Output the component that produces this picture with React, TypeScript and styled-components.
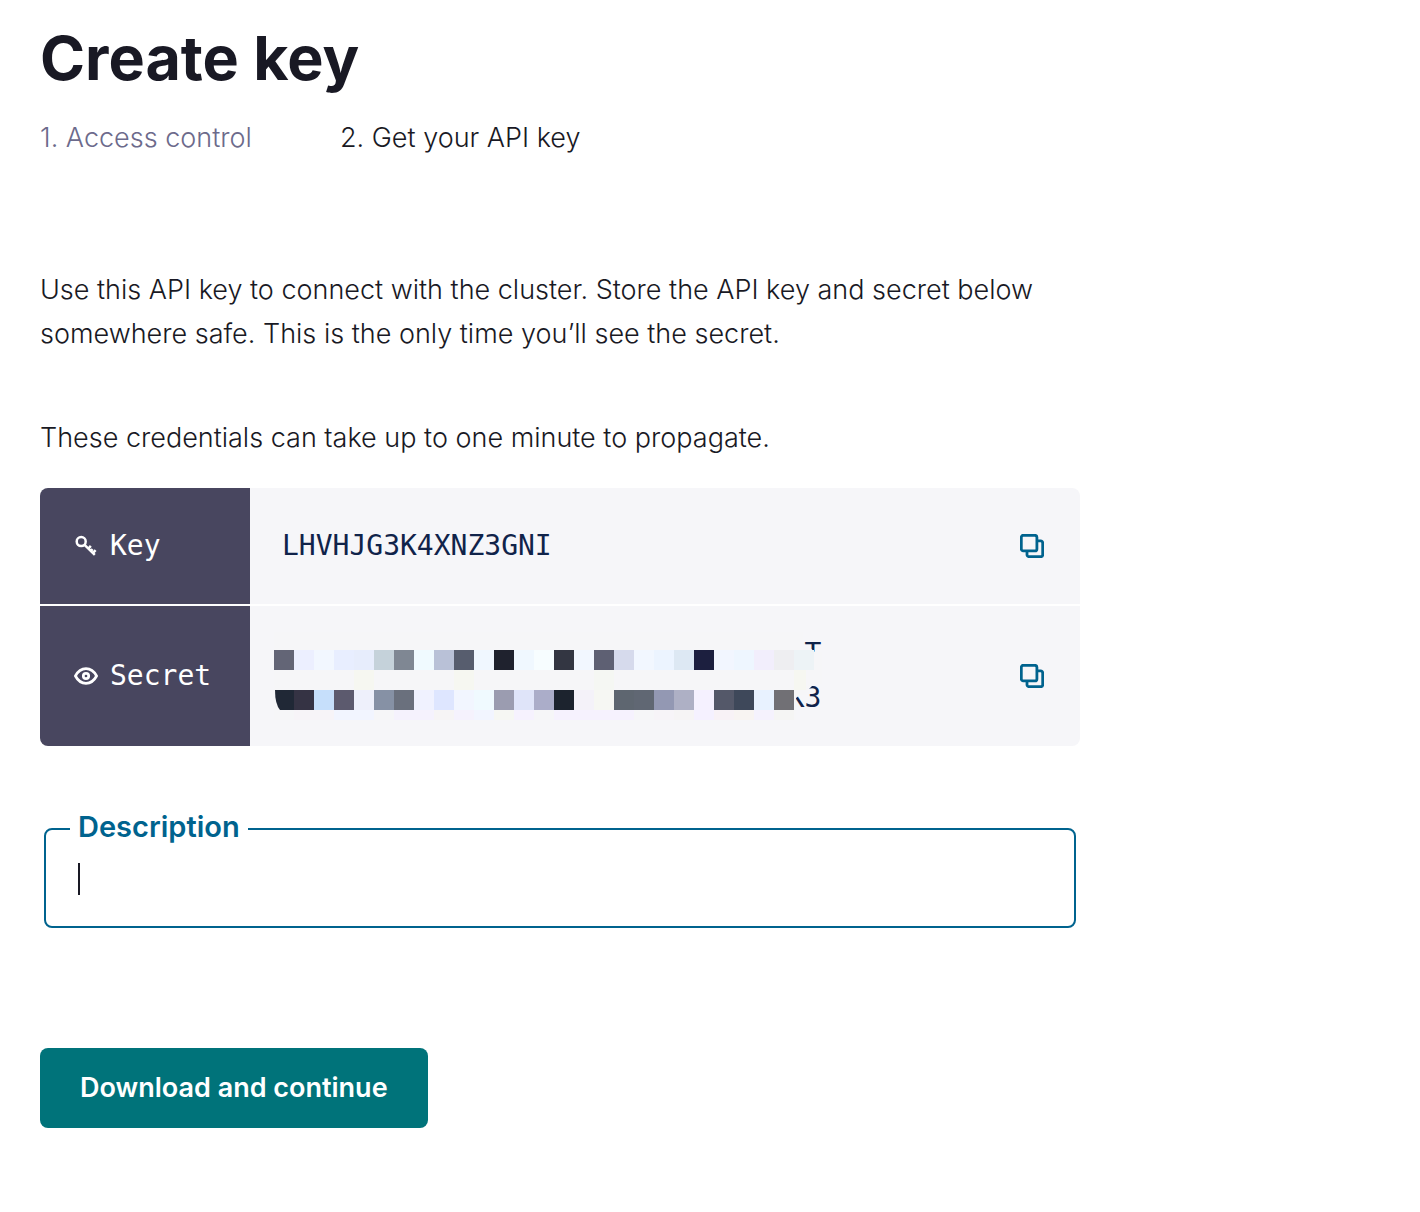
import React from "react";
import styled, { createGlobalStyle } from "styled-components";

const GlobalStyle = createGlobalStyle`
  *, *::before, *::after { box-sizing: border-box; }
  body {
    margin: 0;
    background: #ffffff;
    color: #191924;
    font-family: Inter, "Liberation Sans", sans-serif;
    font-size: 27px;
    font-weight: 300;
    line-height: 44px;
  }
`;

const Page = styled.main`
  max-width: 1120px;
  padding: 20px 40px 84px;
`;

const Title = styled.h1`
  margin: 0;
  font-size: 61px;
  line-height: 76px;
  font-weight: 700;
`;

const Steps = styled.ol`
  display: flex;
  margin: 20px 0 0;
  padding: 0;
  list-style: none;
`;

const Step = styled.li<{ $current?: boolean }>`
  min-width: 300px;
  color: ${(p) => (p.$current ? "#191924" : "#6c6a8b")};
`;

const Intro = styled.p`
  max-width: 1020px;
  margin: 108px 0 0;
`;

const Note = styled.p`
  margin: 60px 0 28px;
`;

const Credentials = styled.table`
  width: 100%;
  border-spacing: 0;
  border-radius: 8px;
  overflow: hidden;
  font-family: "DejaVu Sans Mono", monospace;
  font-size: 28px;
`;

const Row = styled.tr`
  & + & > * {
    border-top: 2px solid #ffffff;
  }
`;

const NameCell = styled.th`
  width: 210px;
  padding: 0 0 0 34px;
  background: #48465f;
  color: #ffffff;
  font-weight: 400;
  text-align: left;
`;

const Name = styled.span`
  display: flex;
  align-items: center;
  gap: 12px;
`;

const ValueCell = styled.td`
  padding: 0 32px;
  background: #f6f6f9;
`;

const Value = styled.div<{ $tall?: boolean }>`
  display: flex;
  align-items: center;
  justify-content: space-between;
  height: ${(p) => (p.$tall ? 140 : 116)}px;
  color: #10234a;
`;

const Secret = styled.span`
  position: relative;
  width: 32ch;
  text-align: right;
`;

const Mosaic = styled.svg`
  position: absolute;
  left: -8px;
  top: 0;
`;

const CopyButton = styled.button`
  display: flex;
  padding: 4px;
  border: 0;
  background: none;
  color: #00638e;
  cursor: pointer;
`;

const Field = styled.fieldset`
  min-width: 0;
  margin: 64px 4px 0;
  padding: 0 32px 16px 24px;
  border: 2px solid #00638e;
  border-radius: 8px;
`;

const Legend = styled.legend`
  padding: 0 8px 4px;
  color: #00638e;
  font-size: 29px;
  line-height: 34px;
  font-weight: 600;
`;

const Entry = styled.div`
  display: flex;
  align-items: center;
  height: 62px;
  padding-left: 8px;
`;

const Caret = styled.span`
  width: 2px;
  height: 32px;
  background: #191924;
`;

const TextInput = styled.input`
  flex: 1;
  min-width: 0;
  height: 44px;
  padding: 0;
  border: 0;
  outline: 0;
  background: none;
  color: inherit;
  font: inherit;
`;

const Submit = styled.button`
  display: block;
  margin-top: 120px;
  padding: 0 40px;
  height: 80px;
  border: 0;
  border-radius: 8px;
  background: #00737a;
  color: #ffffff;
  font: inherit;
  font-weight: 600;
  cursor: pointer;
`;

const KeyIcon = () => (
  <svg width="24" height="24" viewBox="0 0 24 24" fill="none" stroke="currentColor" strokeWidth="2.5" aria-hidden="true">
    <circle cx="7.200" cy="7.600" r="4.500" />
    <path d="M10.300 10.700 20.800 20.800M14.400 14.800l2.400-2.900M19 19l2.600-2.900M17 17l1.600-1.900" />
  </svg>
);

const EyeIcon = () => (
  <svg width="24" height="24" viewBox="0 0 24 24" fill="none" stroke="currentColor" aria-hidden="true">
    <path d="M1.400 12C4 7.200 7.700 4.700 12 4.700S20 7.200 22.600 12C20 16.800 16.300 19.300 12 19.300S4 16.800 1.400 12Z" strokeWidth="2.700" strokeLinejoin="round" />
    <circle cx="12" cy="12" r="2.700" strokeWidth="2.700" />
  </svg>
);

const CopyIcon = () => (
  <svg width="24" height="24" viewBox="0 0 24 24" fill="none" stroke="currentColor" strokeWidth="2.800" aria-hidden="true">
    <rect x="1.300" y="1.300" width="15.600" height="15.600" rx="2" />
    <path d="M18 6.900h2.700a2 2 0 0 1 2 2v11.800a2 2 0 0 1-2 2H9a2 2 0 0 1-2-2V18" />
  </svg>
);

const CELL = 20;

const MOSAIC_ROWS: { y: number; height: number; cells: string[] }[] = [
  {
    y: 18,
    height: 20,
    cells: "#636576 #ecefff #f2f7ff #e8eeff #e7edfc #c5d2da #7f8793 #f0faff #b9c1d7 #575d6e #f0f7ff #1f222e #f0f8ff #f7fdff #333642 #f2f7ff #5e6073 #d6daec #f2f7ff #ecf4ff #dde8f3 #1c1f3f #f2f6ff #eef6ff #f2eefc #eeeef1 #edf3f6".split(" "),
  },
  {
    y: 38,
    height: 20,
    cells: "- - - - #f6f7f1 - - - - #f6f7f1 - - - - - - #f5f7f3 - - - - - - - - - #f6f7f1".split(" "),
  },
  {
    y: 58,
    height: 20,
    cells: "- #353344 #c6dffb #5c5a6e #eef0fb #8691a5 #6a707d #f0f2ff #dee6ff #f2f6ff #f0faff #9b9cb0 #dfe4f9 #abadc9 #1c232e #f4f2f9 #f6f7f3 #5e6670 #606773 #9398b3 #aeb0c5 #f5f1ff #545869 #3e485a #e8f2ff #717075".split(" "),
  },
  {
    y: 78,
    height: 10,
    cells: "- #f7f4f8 #f7f4f8 #f2f5ff #f2f5ff - #f5f2fd #f5f2fd #f6f4f5 #f5f2fd #f2f5ff #f6f7f3 #f6f2fe - #f6f2fe #f6f2fe #f6f2fe #f6f2fe - #f7f4f8 #f6f4f5 #f5f1ff #f8f2f6 #f8f4f2 #f5f2fd #f5f5f4".split(" "),
  },
];

const Redaction = () => (
  <Mosaic width="552" height="88" viewBox="0 0 552 88" aria-hidden="true">
    <path d="M0 0H529V15H535L541 20H548V52H540L532 60V63H526L522 66V88H0Z" fill="#f6f6f8" />
    {MOSAIC_ROWS.map((row) =>
      row.cells.map((fill, i) =>
        fill === "-" ? null : (
          <rect key={`${row.y}-${i}`} x={i * CELL} y={row.y} width={i === 26 && row.y > 18 ? 12 : CELL} height={row.height} fill={fill} shapeRendering="crispEdges" />
        )
      )
    )}
    <path d="M1 58H20V78H6Q1 72 1 58Z" fill="#202836" />
  </Mosaic>
);

export default function App() {
  return (
    <>
      <GlobalStyle />
      <Page>
        <Title>Create key</Title>
        <Steps>
          <Step>1. Access control</Step>
          <Step $current aria-current="step">2. Get your API key</Step>
        </Steps>
        <Intro>
          Use this API key to connect with the cluster. Store the API key and secret below
          somewhere safe. This is the only time you’ll see the secret.
        </Intro>
        <Note>These credentials can take up to one minute to propagate.</Note>
        <Credentials>
          <tbody>
            <Row>
              <NameCell scope="row">
                <Name><KeyIcon />Key</Name>
              </NameCell>
              <ValueCell>
                <Value>
                  <span>LHVHJG3K4XNZ3GNI</span>
                  <CopyButton type="button" aria-label="Copy key"><CopyIcon /></CopyButton>
                </Value>
              </ValueCell>
            </Row>
            <Row>
              <NameCell scope="row">
                <Name><EyeIcon />Secret</Name>
              </NameCell>
              <ValueCell>
                <Value $tall>
                  <Secret>
                    T<br />K3
                    <Redaction />
                  </Secret>
                  <CopyButton type="button" aria-label="Copy secret"><CopyIcon /></CopyButton>
                </Value>
              </ValueCell>
            </Row>
          </tbody>
        </Credentials>
        <Field>
          <Legend><label htmlFor="description">Description</label></Legend>
          <Entry>
            <Caret />
            <TextInput id="description" type="text" />
          </Entry>
        </Field>
        <Submit type="button">Download and continue</Submit>
      </Page>
    </>
  );
}
